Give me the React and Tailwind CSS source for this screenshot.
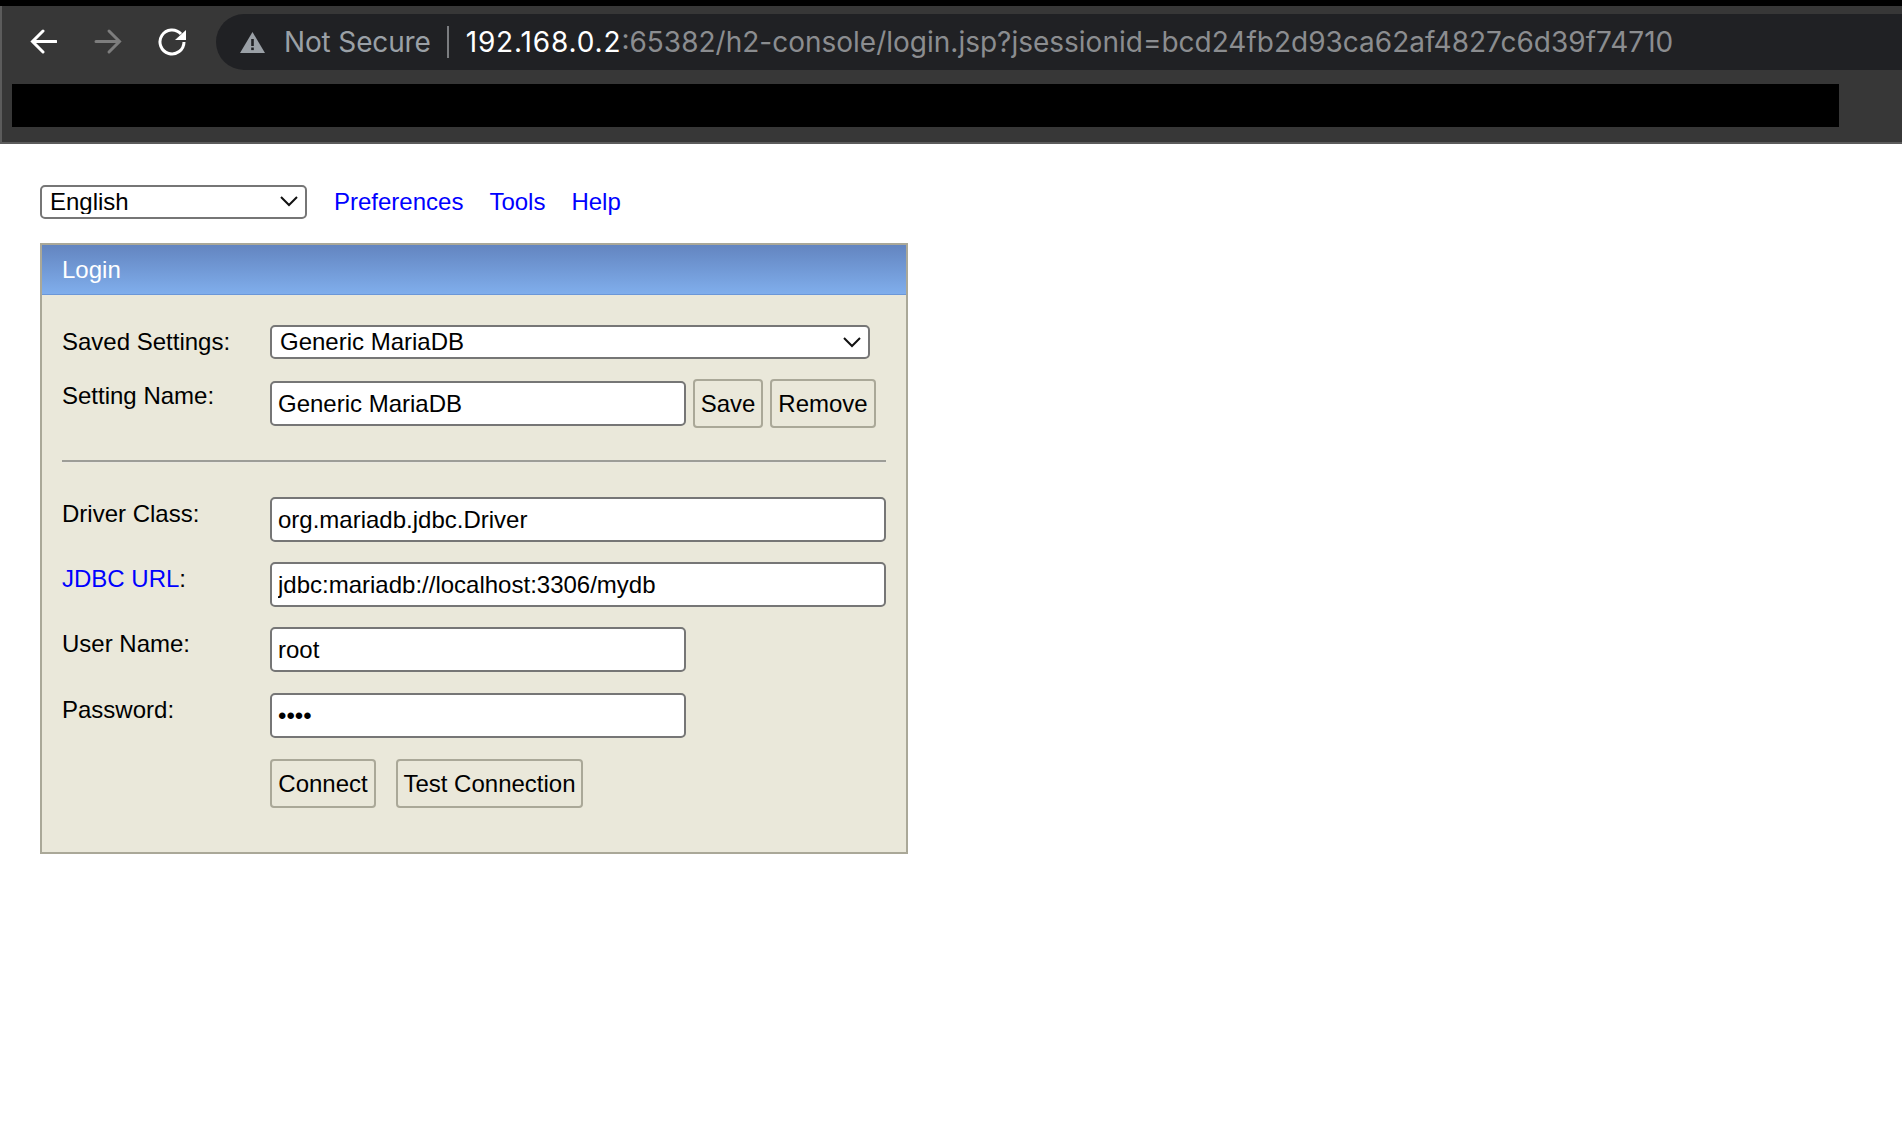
import React from 'react';

const sans = 'font-["Liberation_Sans",Arial,sans-serif]';

const Chevron = () => (
  <svg className="absolute right-[8px] top-1/2 -translate-y-1/2 pointer-events-none" width="20" height="12" viewBox="0 0 20 12" fill="none" stroke="#111" strokeWidth="2">
    <path d="M2 2l8 8 8-8" />
  </svg>
);

const SelectBox = ({ value, className }) => (
  <div className={`relative ${className}`}>
    <select defaultValue={value} className={`w-full h-full appearance-none bg-white border-2 border-[#767676] rounded-[5px] pl-[8px] text-[24px] leading-none text-black ${sans}`}>
      <option>{value}</option>
    </select>
    <Chevron />
  </div>
);

const Field = ({ value, type = 'text', className }) => (
  <input
    type={type}
    defaultValue={value}
    className={`h-[45px] bg-white border-2 border-[#767676] rounded-[5px] px-[6px] text-[24px] text-black ${sans} ${className}`}
  />
);

const Btn = ({ children, className }) => (
  <button className={`h-[49px] border-2 border-[#aaa898] rounded-[4px] bg-[#eae8da] text-[24px] text-black ${sans} ${className}`}>
    {children}
  </button>
);

const Row = ({ label, children, className }) => (
  <div className={`flex items-start ${className}`}>
    <div className="w-[208px] shrink-0 text-[24px] leading-[34px] text-black">{label}</div>
    {children}
  </div>
);

const BrowserBar = () => (
  <div className="h-[144px] bg-black pt-[6px]">
    <div className="h-[138px] bg-[#373737] border-l-2 border-b-2 border-[#5c5c5c] pt-[8px]">
      <div className="flex items-center h-[56px]">
        <svg className="ml-[27px]" width="28" height="28" viewBox="0 0 28 28" fill="none" stroke="#fff" strokeWidth="3" strokeLinecap="round">
          <path d="M27 13.5H4M14 3 3.5 13.5 14 24" />
        </svg>
        <svg className="ml-[37px]" width="28" height="28" viewBox="0 0 28 28" fill="none" stroke="#7d7d7d" strokeWidth="3" strokeLinecap="round">
          <path d="M2 13.5h23M15 3l10.5 10.5L15 24" />
        </svg>
        <svg className="ml-[36px]" width="30" height="30" viewBox="0 0 30 30" fill="none">
          <path d="M23 7A12 12 0 1 0 26 15" stroke="#fff" strokeWidth="3" />
          <path d="M28 3v10H17z" fill="#fff" />
        </svg>
        <div className="ml-[28px] flex-1 h-[56px] bg-[#202124] rounded-l-[28px] flex items-center font-['Inter',sans-serif] text-[28px]">
          <svg className="ml-[24px]" width="25" height="21" viewBox="0 0 25 21">
            <path d="M12.5 0L25 21H0z" fill="#9aa0a6" />
            <rect x="11.2" y="7" width="2.6" height="7" fill="#202124" />
            <rect x="11.2" y="15.5" width="2.6" height="2.6" fill="#202124" />
          </svg>
          <span className="ml-[19px] text-[#9aa0a6] tracking-[-0.15px] whitespace-nowrap">Not Secure</span>
          <span className="ml-[16px] w-[2px] h-[32px] bg-[#7b7d80]" />
          <span className="ml-[17px] whitespace-nowrap">
            <span className="text-white tracking-[0.85px]">192.168.0.2</span>
            <span className="text-[#8b8d90] tracking-[0px]">:65382/h2-console/login.jsp?jsessionid=bcd24fb2d93ca62af4827c6d39f74710</span>
          </span>
        </div>
      </div>
      <div className="mt-[14px] ml-[10px] w-[1827px] h-[43px] bg-black" />
    </div>
  </div>
);

export default function App() {
  return (
    <div className={`min-h-[1148px] bg-white ${sans}`}>
      <BrowserBar />
      <div className="pt-[40px] pl-[40px]">
        <div className="flex items-center h-[34px] text-[24px] text-[#0000ff]">
          <SelectBox value="English" className="w-[267px] h-[34px]" />
          <a className="ml-[27px] mt-[2px]">Preferences</a>
          <a className="ml-[26px] mt-[2px]">Tools</a>
          <a className="ml-[26px] mt-[2px]">Help</a>
        </div>
        <div className="mt-[25px] w-[868px] h-[611px] border-2 border-[#aaa898] bg-[#eae8da]">
          <div className="h-[50px] bg-gradient-to-b from-[#6385c0] to-[#80aeec] border-b border-[#6b97d8] pl-[20px] text-[24px] leading-[50px] text-white">
            Login
          </div>
          <div className="pl-[20px] pr-[20px] pt-[30px]">
            <Row label="Saved Settings:">
              <SelectBox value="Generic MariaDB" className="w-[600px] h-[34px]" />
            </Row>
            <Row label="Setting Name:" className="mt-[20px] -mb-[2px]">
              <Field value="Generic MariaDB" className="w-[416px] mt-[2px]" />
              <Btn className="ml-[7px] w-[70px]">Save</Btn>
              <Btn className="ml-[7px] w-[106px]">Remove</Btn>
            </Row>
            <div className="mt-[34px] h-[3px] bg-[#e9e7e0] border-t-2 border-[#9d9d97]" />
            <Row label="Driver Class:" className="mt-[34px]">
              <Field value="org.mariadb.jdbc.Driver" className="w-[617px]" />
            </Row>
            <Row label={<><a className="text-[#0000ff]">JDBC URL</a>:</>} className="mt-[20px]">
              <Field value="jdbc:mariadb://localhost:3306/mydb" className="w-[617px]" />
            </Row>
            <Row label="User Name:" className="mt-[20px]">
              <Field value="root" className="w-[416px]" />
            </Row>
            <Row label="Password:" className="mt-[21px]">
              <Field value="root" type="password" className="w-[416px]" />
            </Row>
            <Row label="" className="mt-[21px]">
              <Btn className="w-[106px]">Connect</Btn>
              <Btn className="ml-[20px] w-[187px]">Test Connection</Btn>
            </Row>
          </div>
        </div>
      </div>
    </div>
  );
}
